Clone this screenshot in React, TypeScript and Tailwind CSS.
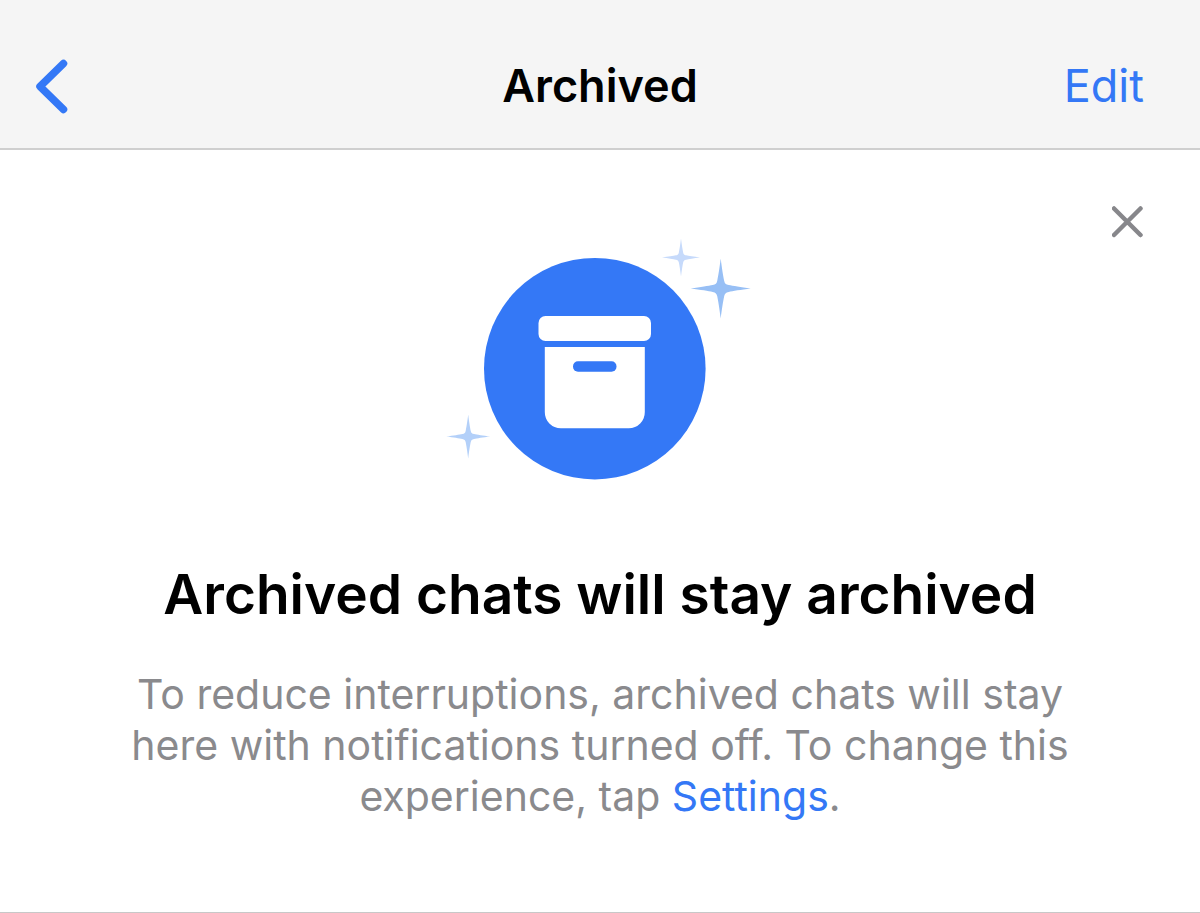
type SparkleProps = {
  x: number;
  y: number;
  size: number;
  color: string;
};

// four-pointed star with slightly concave arms
function Sparkle({ x, y, size, color }: SparkleProps) {
  return (
    <path
      transform={`translate(${x} ${y}) scale(${size / 30})`}
      fill={color}
      d="M0 -30 C1.2 -20 2.6 -12 3.4 -8 C4 -5 5 -4 8 -3.4 C12 -2.6 20 -1.2 30 0 C20 1.2 12 2.6 8 3.4 C5 4 4 5 3.4 8 C2.6 12 1.2 20 0 30 C-1.2 20 -2.6 12 -3.4 8 C-4 5 -5 4 -8 3.4 C-12 2.6 -20 1.2 -30 0 C-20 -1.2 -12 -2.6 -8 -3.4 C-5 -4 -4 -5 -3.4 -8 C-2.6 -12 -1.2 -20 0 -30 Z"
    />
  );
}

function ArchiveIllustration() {
  return (
    <svg width="320" height="244" viewBox="0 0 320 244" aria-hidden="true">
      <circle cx="154.8" cy="130.7" r="110.8" fill="#3478f6" />
      {/* Box lid, body and handle */}
      <rect x="98.5" y="78" width="112.5" height="25" rx="7" fill="#fff" />
      <path
        d="M104.8 109 H204.8 V174 A16 16 0 0 1 188.8 190.3 H120.8 A16 16 0 0 1 104.8 174 Z"
        fill="#fff"
      />
      <rect x="133" y="123.3" width="43.5" height="10.5" rx="5" fill="#3478f6" />
      <Sparkle x={241} y={19.5} size={19} color="#c6dafb" />
      <Sparkle x={280.7} y={50.5} size={30} color="#97bff5" />
      <Sparkle x={28.2} y={198.5} size={22} color="#b3d0f9" />
    </svg>
  );
}

function Header() {
  return (
    <header className="grid h-[150px] grid-cols-[1fr_auto_1fr] items-center border-b-2 border-[#cfcfcf] bg-[#f5f5f5] px-14 pt-6">
      <button
        type="button"
        aria-label="Back"
        className="-ml-6 justify-self-start"
      >
        <svg width="40" height="56" viewBox="0 0 40 56" fill="none">
          <path
            d="M31.5 5.5 L8 28.5 L31.5 51.5"
            stroke="#3478f6"
            strokeWidth="7.5"
            strokeLinecap="round"
            strokeLinejoin="round"
          />
        </svg>
      </button>
      <h1 className="text-[45px] leading-14 font-semibold">Archived</h1>
      <button
        type="button"
        className="justify-self-end text-[45px] leading-14 text-[#3478f6]"
      >
        Edit
      </button>
    </header>
  );
}

export default function App() {
  return (
    <div className="bg-white font-['Inter','Liberation_Sans',sans-serif] text-black">
      <Header />
      <main>
        {/* Archive notice */}
        <section className="flex flex-col items-center border-b border-[#c8c8c8] px-14 pt-14 pb-[90px]">
          <button type="button" aria-label="Close" className="self-end">
            <svg width="32" height="32" viewBox="0 0 32 32" fill="none">
              <path
                d="M2 2.5 L28.5 29 M28.5 2.5 L2 29"
                stroke="#87878b"
                strokeWidth="4.5"
                strokeLinecap="round"
              />
            </svg>
          </button>
          <ArchiveIllustration />
          <h2 className="mt-20 text-center text-[55px] leading-16 font-semibold">
            Archived chats will stay archived
          </h2>
          <p className="mt-[43px] max-w-[960px] text-center text-[41px] leading-[51px] text-[#8a8a8d]">
            To reduce interruptions, archived chats will stay here with
            notifications turned off. To change this experience, tap{" "}
            <a href="#settings" className="text-[#3478f6]">
              Settings
            </a>
            .
          </p>
        </section>
      </main>
    </div>
  );
}
